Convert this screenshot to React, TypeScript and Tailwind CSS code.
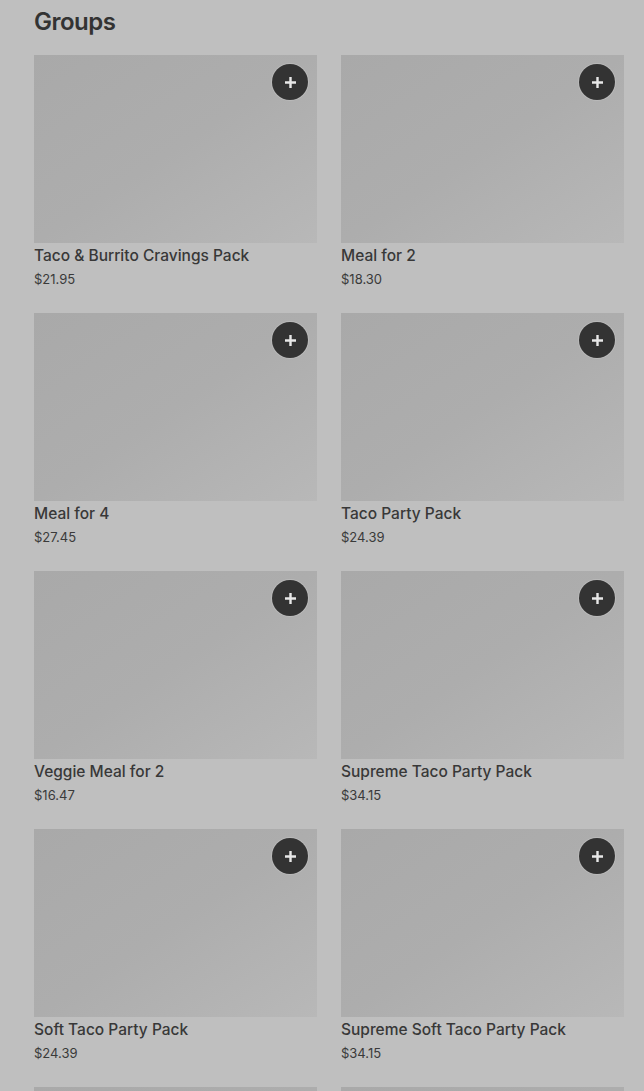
import React from 'react';

type Item = { name: string; price: string };

const items: Item[] = [
  { name: 'Taco & Burrito Cravings Pack', price: '$21.95' },
  { name: 'Meal for 2', price: '$18.30' },
  { name: 'Meal for 4', price: '$27.45' },
  { name: 'Taco Party Pack', price: '$24.39' },
  { name: 'Veggie Meal for 2', price: '$16.47' },
  { name: 'Supreme Taco Party Pack', price: '$34.15' },
  { name: 'Soft Taco Party Pack', price: '$24.39' },
  { name: 'Supreme Soft Taco Party Pack', price: '$34.15' },
  { name: 'Burrito Party Pack', price: '$24.39' },
  { name: 'Supreme Burrito Party Pack', price: '$34.15' },
];

const ItemCard = ({ item }: { item: Item }) => (
  <div className="flex flex-col">
    <div className="relative h-[188px] w-full bg-linear-to-br from-[#a9a9a9] via-[#adadad] to-[#b8b8b8]">
      <button className="absolute right-[9px] top-[9px] flex h-9 w-9 items-center justify-center rounded-full bg-[#333333] shadow-[0_0_0_1px_rgba(255,255,255,0.15)]">
        <svg width="13" height="13" viewBox="0 0 13 13" fill="none">
          <path d="M6.5 1v11M1 6.5h11" stroke="#e8e8e8" strokeWidth="2.4" />
        </svg>
      </button>
    </div>
    <div className="mt-[3px] text-[15.5px] leading-[20px] font-medium text-[#383838]">{item.name}</div>
    <div className="mt-[4px] text-[13px] leading-[18px] text-[#3a3a3a]">{item.price}</div>
  </div>
);

export default function App() {
  return (
    <div className="min-h-screen bg-[#bfbfbf] pl-[34px] pr-[20px] font-['Inter',sans-serif]">
      <h2 className="pt-[6px] pb-[17px] text-[24px] leading-[32px] font-semibold tracking-[-0.5px] text-[#333333]">
        Groups
      </h2>
      <div className="grid grid-cols-2 gap-x-6 gap-y-[25px]">
        {items.map((it, i) => (
          <ItemCard key={i} item={it} />
        ))}
      </div>
    </div>
  );
}
